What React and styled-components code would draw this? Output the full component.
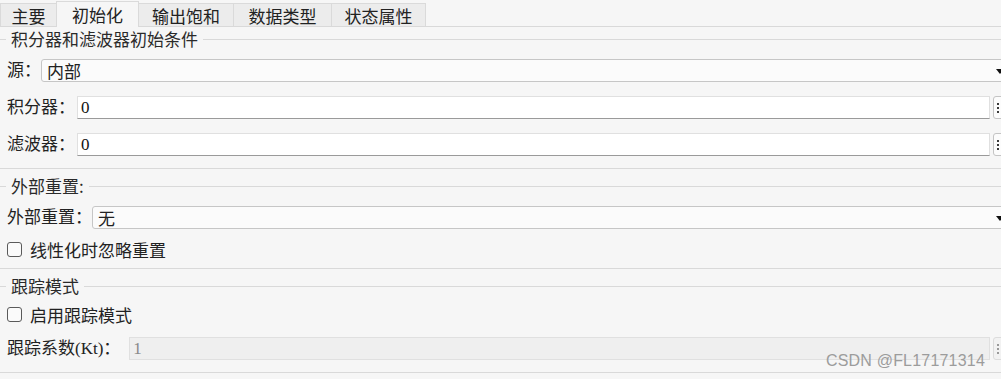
import * as React from "react";
import styled, { createGlobalStyle } from "styled-components";

const GlobalStyle = createGlobalStyle`
  html, body {
    margin: 0;
    padding: 0;
    background: #f6f6f6;
    overflow: hidden;
  }
  body {
    font-family: "Liberation Serif", "Noto Sans CJK SC", serif;
    font-size: 17px;
    color: #222;
  }
`;

const tabs = [
  { name: "主要", w: 57 },
  { name: "初始化", w: 83, active: true },
  { name: "输出饱和", w: 96 },
  { name: "数据类型", w: 99 },
  { name: "状态属性", w: 95 },
];

const DotsIcon = ({ muted }) => (
  <svg width="8" height="12" viewBox="0 0 8 12">
    {[1, 5, 9].map((y) =>
      [0, 4].map((x) => (
        <rect key={`${x}-${y}`} x={x} y={y} width="2" height="2" fill={muted ? "#9a9a9a" : "#3a3a3a"} />
      ))
    )}
  </svg>
);

const Group = ({ title, children }) => (
  <Fieldset>
    <Legend>
      <span>{title}</span>
    </Legend>
    <Fields>{children}</Fields>
  </Fieldset>
);

const App = () => {
  return (
    <Viewport>
      <GlobalStyle />
      <Panel>
        <TabBar>
          {tabs.map((t) => (
            <Tab key={t.name} $w={t.w} $active={t.active}>
              {t.name}
            </Tab>
          ))}
        </TabBar>

        <Group title="积分器和滤波器初始条件">
          <FieldRow>
            <Label>源：</Label>
            <Select>内部</Select>
          </FieldRow>
          <FieldRow>
            <Label>积分器：</Label>
            <TextInput $gap={2}>0</TextInput>
            <DotsButton><DotsIcon /></DotsButton>
          </FieldRow>
          <FieldRow>
            <Label>滤波器：</Label>
            <TextInput $gap={2}>0</TextInput>
            <DotsButton><DotsIcon /></DotsButton>
          </FieldRow>
        </Group>

        <Group title="外部重置:">
          <FieldRow>
            <Label>外部重置：</Label>
            <Select>无</Select>
          </FieldRow>
          <CheckRow $h={27}>
            <CheckBox />
            <span>线性化时忽略重置</span>
          </CheckRow>
        </Group>

        <Group title="跟踪模式">
          <CheckRow $h={31}>
            <CheckBox />
            <span>启用跟踪模式</span>
          </CheckRow>
          <FieldRow>
            <Label>跟踪系数(Kt)：</Label>
            <TextInput $disabled $gap={9}>1</TextInput>
            <DotsButton $disabled><DotsIcon muted /></DotsButton>
          </FieldRow>
        </Group>
      </Panel>
      <Watermark>CSDN @FL17171314</Watermark>
    </Viewport>
  );
};

export default App;

const Viewport = styled.div`
  position: relative;
  width: 100vw;
  height: 379px;
  overflow: hidden;
`;

const Panel = styled.div`
  width: 1012px;
  display: flex;
  flex-direction: column;
`;

const TabBar = styled.div`
  display: flex;
  align-items: flex-end;
  height: 26px;
  border-bottom: 1px solid #d9d9d9;
`;

const Tab = styled.div`
  width: ${(p) => p.$w}px;
  height: ${(p) => (p.$active ? 26 : 23)}px;
  margin-bottom: ${(p) => (p.$active ? -1 : 0)}px;
  margin-left: -1px;
  &:first-child {
    margin-left: 0;
  }
  box-sizing: border-box;
  display: flex;
  align-items: center;
  justify-content: center;
  padding-top: ${(p) => (p.$active ? 0 : 1)}px;
  background: ${(p) => (p.$active ? "#f6f6f6" : "#ececec")};
  border: 1px solid #dadada;
  border-bottom: none;
  color: #222;
  font-family: "Noto Sans CJK SC", sans-serif;
  font-size: 17px;
  position: relative;
  z-index: ${(p) => (p.$active ? 1 : 0)};
`;

const Fieldset = styled.div`
  display: flex;
  flex-direction: column;
  margin-top: 6px;
  padding-bottom: 5px;
  border-bottom: 1px solid #d9d9d9;
  &:nth-child(2) {
    margin-top: 1px;
  }
`;

const Legend = styled.div`
  display: flex;
  align-items: center;
  height: 22px;
  color: #2a2a2a;
  &::before {
    content: "";
    width: 6px;
    border-top: 1px solid #d9d9d9;
  }
  &::after {
    content: "";
    flex: 1;
    border-top: 1px solid #d9d9d9;
  }
  span {
    padding: 0 5px;
    font-family: "Noto Sans CJK SC", sans-serif;
    line-height: 22px;
  }
`;

const Fields = styled.div`
  display: flex;
  flex-direction: column;
  padding-top: 2px;
`;

const FieldRow = styled.div`
  display: flex;
  align-items: center;
  height: 37px;
  padding-left: 7px;
`;

const Label = styled.span`
  white-space: nowrap;
  line-height: 23px;
`;

const Select = styled.div`
  flex: 1;
  position: relative;
  height: 23px;
  box-sizing: border-box;
  display: flex;
  align-items: center;
  padding-left: 5px;
  background: #fbfbfb;
  border: 1px solid #c6c6c6;
  border-radius: 3px;
  &::after {
    content: "";
    position: absolute;
    right: 7px;
    top: 9px;
    border-left: 4px solid transparent;
    border-right: 4px solid transparent;
    border-top: 5px solid #111;
  }
`;

const TextInput = styled.div`
  flex: 1;
  height: 23px;
  box-sizing: border-box;
  margin-left: ${(p) => p.$gap}px;
  display: flex;
  align-items: center;
  padding-left: 3px;
  background: ${(p) => (p.$disabled ? "#efefef" : "#ffffff")};
  color: ${(p) => (p.$disabled ? "#8a8a8a" : "#111")};
  border: 1px solid #e0e0e0;
  border-bottom-color: ${(p) => (p.$disabled ? "#e0e0e0" : "#9a9a9a")};
`;

const DotsButton = styled.div`
  width: 19px;
  height: 23px;
  box-sizing: border-box;
  margin-left: 3px;
  display: flex;
  align-items: center;
  padding-left: 3px;
  background: ${(p) => (p.$disabled ? "#f2f2f2" : "#fcfcfc")};
  border: 1px solid ${(p) => (p.$disabled ? "#dcdcdc" : "#c4c4c4")};
  border-radius: 3px;
`;

const CheckRow = styled.label`
  display: flex;
  align-items: center;
  gap: 8px;
  height: ${(p) => p.$h}px;
  padding-left: 7px;
`;

const CheckBox = styled.span`
  width: 15px;
  height: 15px;
  box-sizing: border-box;
  border: 1.5px solid #5a5a5a;
  border-radius: 3px;
  background: #fafafa;
`;

const Watermark = styled.div`
  position: absolute;
  right: 16px;
  top: 352px;
  font-family: "Liberation Sans", sans-serif;
  font-size: 16px;
  color: #9c9c9c;
  letter-spacing: 0.2px;
`;
